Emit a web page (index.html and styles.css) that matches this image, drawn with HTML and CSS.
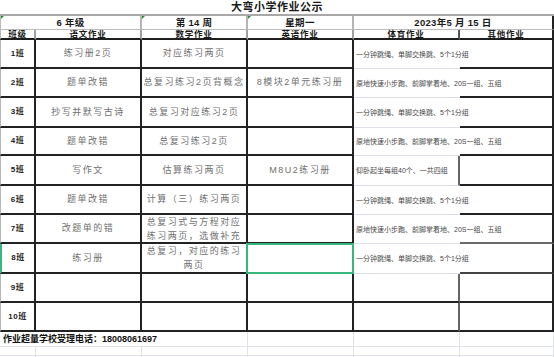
FILE: index.html
```html
<!DOCTYPE html>
<html lang="zh-CN">
<head>
<meta charset="utf-8">
<title>大弯小学作业公示</title>
<link rel="stylesheet" href="styles.css">
</head>
<body>
<div class="sheet">
  <div class="c title">大弯小学作业公示</div>

  <div class="c h2 span2 first tri">6 年级</div>
  <div class="c h2 tri">第 14 周</div>
  <div class="c h2 tri">星期一</div>
  <div class="c h2 span2 last">2023年5 月 15 日</div>

  <div class="c h3 first">班级</div>
  <div class="c h3">语文作业</div>
  <div class="c h3">数学作业</div>
  <div class="c h3">英语作业</div>
  <div class="c h3 mid">体育作业</div>
  <div class="c h3 last">其他作业</div>

  <div class="c rh">1班</div>
  <div class="c tx">练习册2页</div>
  <div class="c tx">对应练习两页</div>
  <div class="c tx"></div>
  <div class="c pe">一分钟跳绳、单脚交换跳、5个1分组</div>
  <div class="c ot"></div>

  <div class="c rh">2班</div>
  <div class="c tx">题单改错</div>
  <div class="c tx">总复习练习2页背概念</div>
  <div class="c tx">8模块2单元练习册</div>
  <div class="c pe">原地快速小步跑、前脚掌着地、20S一组、五组</div>
  <div class="c ot"></div>

  <div class="c rh">3班</div>
  <div class="c tx">抄写并默写古诗</div>
  <div class="c tx">总复习对应练习2页</div>
  <div class="c tx"></div>
  <div class="c pe">一分钟跳绳、单脚交换跳、5个1分组</div>
  <div class="c ot"></div>

  <div class="c rh">4班</div>
  <div class="c tx">题单改错</div>
  <div class="c tx">总复习练习2页</div>
  <div class="c tx"></div>
  <div class="c pe">原地快速小步跑、前脚掌着地、20S一组、五组</div>
  <div class="c ot"></div>

  <div class="c rh">5班</div>
  <div class="c tx">写作文</div>
  <div class="c tx">估算练习两页</div>
  <div class="c tx">M8U2练习册</div>
  <div class="c pe closed">仰卧起坐每组40个、一共四组</div>
  <div class="c ot"></div>

  <div class="c rh">6班</div>
  <div class="c tx">题单改错</div>
  <div class="c tx">计算（三）练习两页</div>
  <div class="c tx"></div>
  <div class="c pe">一分钟跳绳、单脚交换跳、5个1分组</div>
  <div class="c ot"></div>

  <div class="c rh">7班</div>
  <div class="c tx">改题单的错</div>
  <div class="c tx"><span class="ml">总复习式与方程对应<br>练习两页，选做补充</span></div>
  <div class="c tx"></div>
  <div class="c pe">原地快速小步跑、前脚掌着地、20S一组、五组</div>
  <div class="c ot grey"></div>

  <div class="c rh active">8班</div>
  <div class="c tx">练习册</div>
  <div class="c tx"><span class="ml">总复习，对应的练习<br>两页</span></div>
  <div class="c tx sel"></div>
  <div class="c pe">一分钟跳绳、单脚交换跳、5个1分组</div>
  <div class="c ot dim"></div>

  <div class="c rh">9班</div>
  <div class="c tx"></div>
  <div class="c tx"></div>
  <div class="c tx"></div>
  <div class="c pe boxed"></div>
  <div class="c ot"></div>

  <div class="c rh">10班</div>
  <div class="c tx"></div>
  <div class="c tx"></div>
  <div class="c tx"></div>
  <div class="c pe boxed"></div>
  <div class="c ot"></div>

  <div class="c ft">作业超量学校受理电话：18008061697</div>
  <div class="c g"></div>
  <div class="c g"></div>
  <div class="c g"></div>

  <div class="c g"></div>
  <div class="c g"></div>
  <div class="c g"></div>
  <div class="c g"></div>
  <div class="c g"></div>
  <div class="c g"></div>

  <div class="c g"></div>
  <div class="c g"></div>
  <div class="c g"></div>
  <div class="c g"></div>
  <div class="c g"></div>
  <div class="c g"></div>
</div>
</body>
</html>
```

FILE: styles.css
```css
html, body {
  margin: 0;
  padding: 0;
  background: #ffffff;
}

.sheet {
  display: grid;
  grid-template-columns: 36px 106px 106px 106px 106px 94px;
  grid-template-rows: 16px 14px 10px 29px 29px 30px 28px 30px 29px 29px 30px 29px 29px 15px 9px 12px;
  font-family: "Liberation Sans", "Noto Sans CJK SC", sans-serif;
  color: #1a1a1a;
}

.c {
  box-sizing: border-box;
  display: flex;
  align-items: center;
  justify-content: center;
  white-space: nowrap;
  line-height: 1;
  position: relative;
}

.title {
  grid-column: span 6;
  border-bottom: 2px solid #a8a8a8;
  font-size: 11px;
  font-weight: 700;
  letter-spacing: 0.5px;
  color: #1a1a1a;
}

.span2 {
  grid-column: span 2;
}

.first {
  border-left: 1px solid #b8b8b8;
}

.h2 {
  border-right: 2px solid #b4b4b4;
  border-bottom: 1px solid #bcbcbc;
  font-size: 9.5px;
  font-weight: 700;
  letter-spacing: 0.3px;
}

.h3 {
  border-right: 2px solid #a0a0a0;
  border-bottom: 2px solid #1e1e1e;
  font-size: 8.5px;
  font-weight: 700;
  letter-spacing: 0.8px;
  line-height: 8px;
}

.h3.mid {
  border-right-color: #555555;
}

.last {
  border-right: 2px solid #222222;
}

.tri::before {
  content: "";
  position: absolute;
  left: 0;
  top: 0;
  width: 0;
  height: 0;
  border-top: 3px solid #1f8f3a;
  border-right: 3px solid transparent;
}

.rh {
  border-left: 1px solid #b8b8b8;
  border-right: 2px solid #222222;
  border-bottom: 2px solid #222222;
  font-size: 8px;
  font-weight: 700;
  letter-spacing: 0.5px;
  color: #222222;
}

.rh.active {
  border-left: 2px solid #35b77f;
}

.tx {
  border-right: 2px solid #222222;
  border-bottom: 2px solid #222222;
  font-size: 9px;
  letter-spacing: 1.5px;
  color: #707070;
}

.ml {
  display: block;
  text-align: center;
  line-height: 14px;
}

.sel::after {
  content: "";
  position: absolute;
  left: -2px;
  top: -1px;
  right: -2px;
  bottom: -2px;
  border: 2px solid #35b77f;
}

.pe {
  justify-content: flex-start;
  padding-left: 2px;
  font-size: 7px;
  color: #4a4a4a;
  border-bottom: 1px solid #dcdfe7;
}

.pe.closed {
  border-right: 2px solid #666666;
}

.pe.boxed {
  border-right: 2px solid #666666;
  border-bottom: 2px solid #222222;
}

.ot {
  border-right: 2px solid #222222;
  border-bottom: 2px solid #222222;
}

.ot.grey {
  border-bottom-color: #6a6a6a;
}

.ot.dim {
  border-bottom-color: #444444;
}

.ft {
  grid-column: span 3;
  justify-content: flex-start;
  padding-left: 3px;
  font-size: 9px;
  font-weight: 700;
  color: #111111;
  border-right: 1px solid #e0e3ea;
  border-bottom: 1px solid #dfe2ea;
}

.g {
  border-right: 1px solid #e0e3ea;
  border-bottom: 1px solid #dfe2ea;
}
```
